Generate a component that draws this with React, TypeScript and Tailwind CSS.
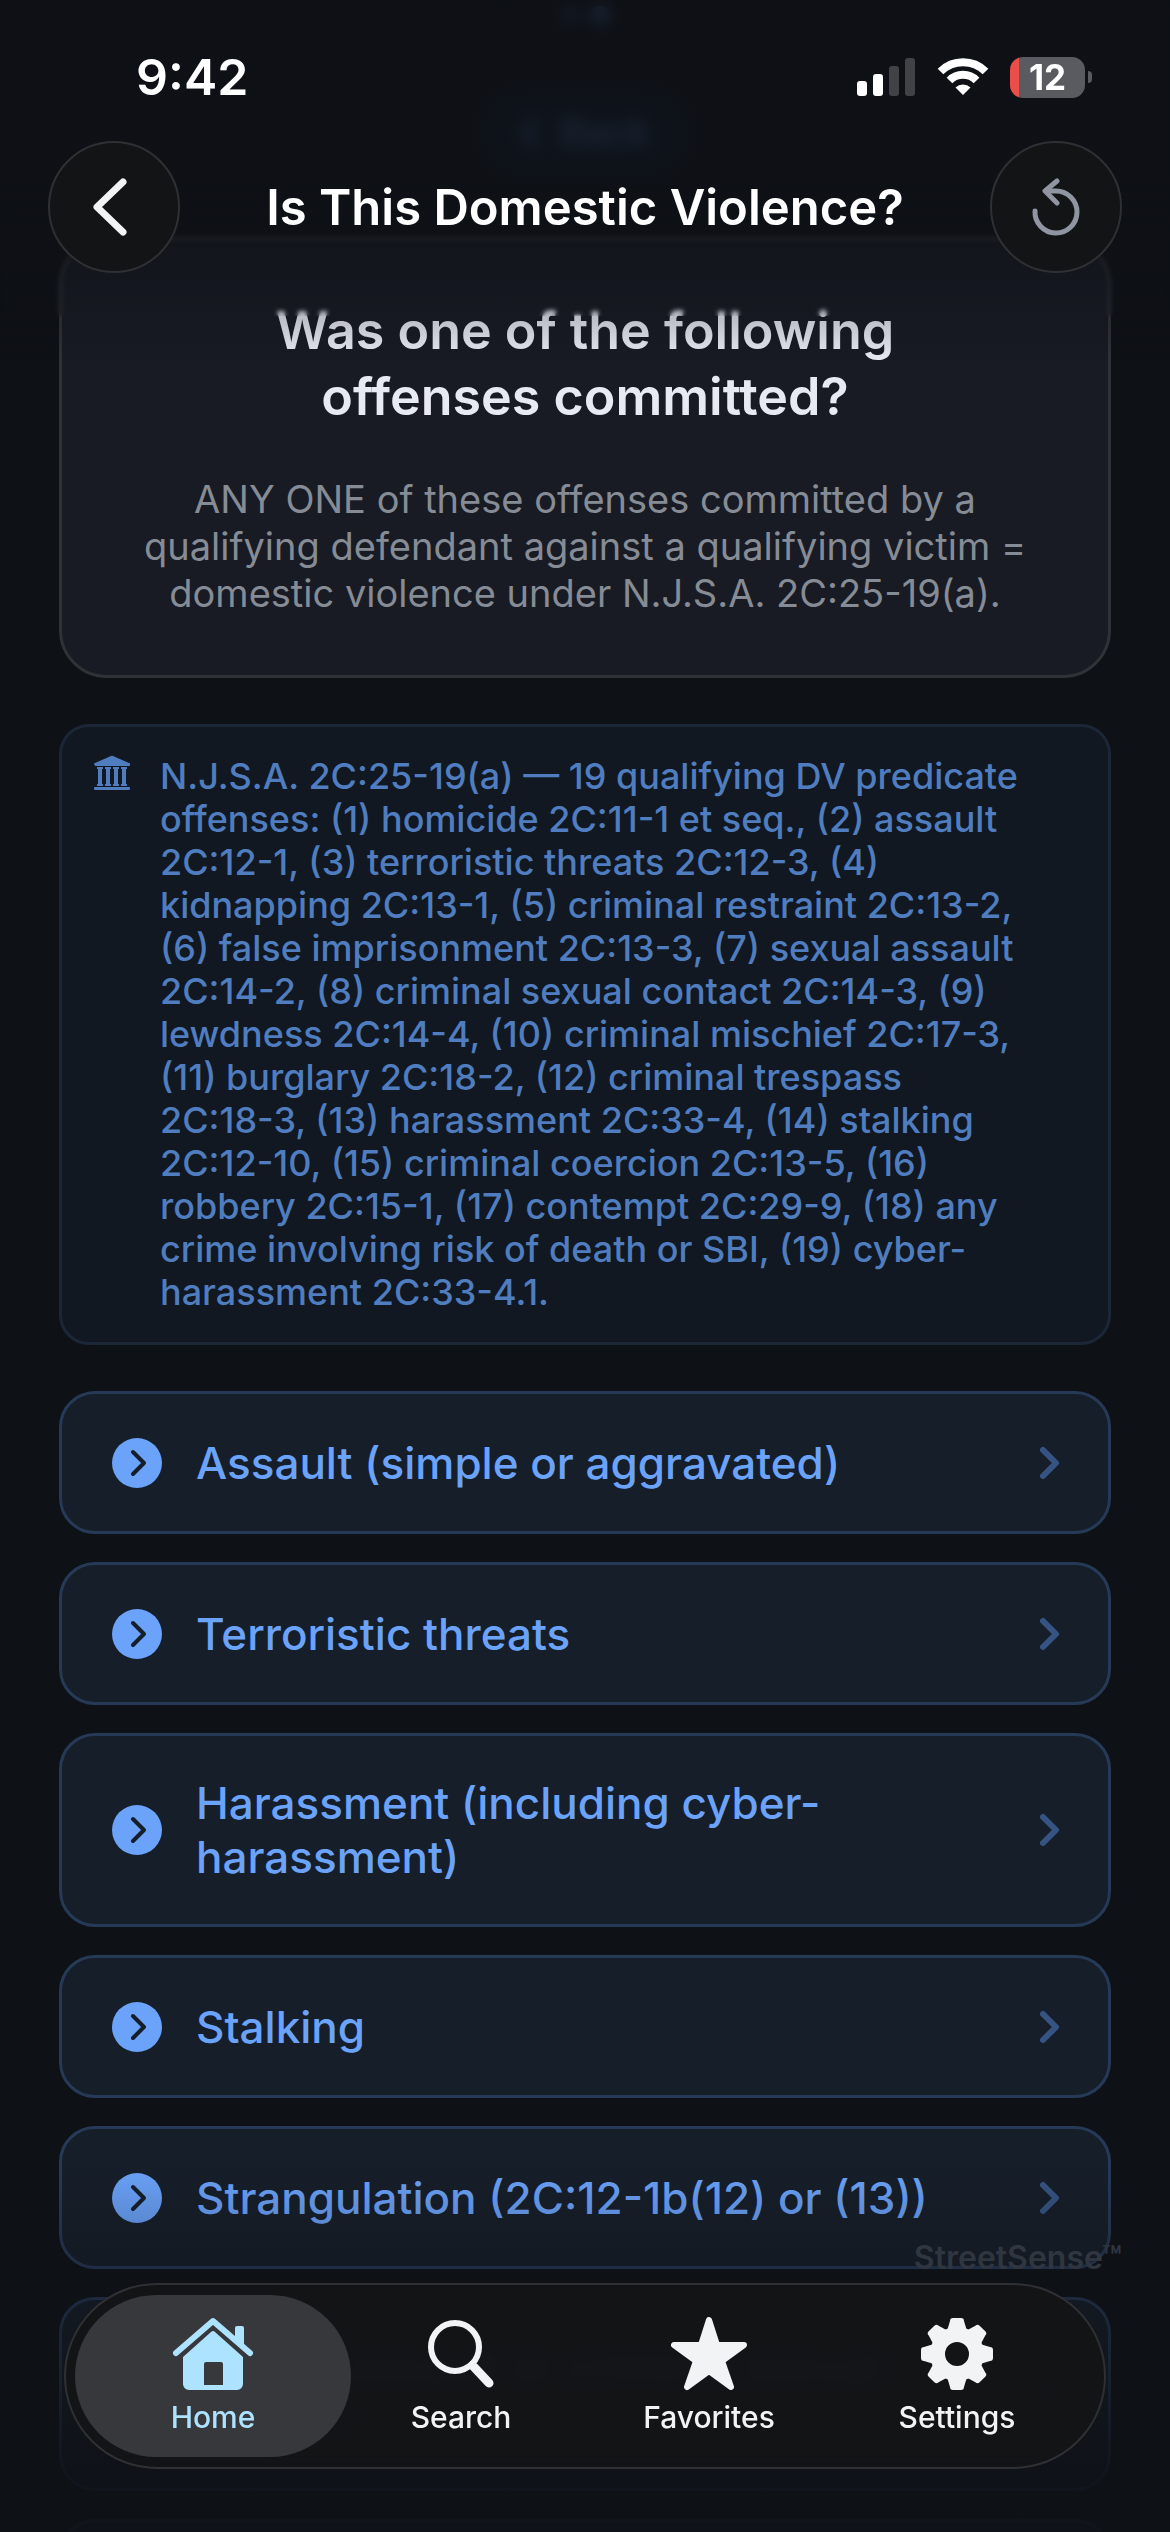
import { useState } from "react";
import type { ReactNode } from "react";

interface Tab {
  id: string;
  label: string;
  icon: ReactNode;
}

const offenses = [
  "Assault (simple or aggravated)",
  "Terroristic threats",
  "Harassment (including cyber-harassment)",
  "Stalking",
  "Strangulation (2C:12-1b(12) or (13))",
  "Sexual assault or criminal sexual contact",
  "Criminal mischief",
];

const tabs: Tab[] = [
  { id: "home", label: "Home", icon: <HomeIcon /> },
  { id: "search", label: "Search", icon: <SearchIcon /> },
  { id: "favorites", label: "Favorites", icon: <StarIcon /> },
  { id: "settings", label: "Settings", icon: <GearIcon /> },
];

function HomeIcon() {
  return (
    <svg viewBox="0 0 82 74" className="h-[74px] w-[82px]" fill="currentColor">
      <path
        d="M4 36 L41 4 L78 36"
        fill="none"
        stroke="currentColor"
        strokeWidth="6"
        strokeLinecap="round"
        strokeLinejoin="round"
      />
      <path d="M63 11a2 2 0 0 1 2-2h5a2 2 0 0 1 2 2v20l-9-8z" />
      <path
        fillRule="evenodd"
        d="M39 15a3 3 0 0 1 4 0 L71 40 V67a6 6 0 0 1-6 6H17a6 6 0 0 1-6-6V40z M34 45a2 2 0 0 0-2 2v21h19V47a2 2 0 0 0-2-2z"
      />
    </svg>
  );
}

function SearchIcon() {
  return (
    <svg viewBox="0 0 68 74" className="h-[74px] w-[68px]" fill="none" stroke="currentColor" strokeLinecap="round">
      <circle cx="28" cy="30" r="24" strokeWidth="6" />
      <path d="M45 47 L46 48" strokeWidth="6" />
      <path d="M47 50 L62 66" strokeWidth="9" />
    </svg>
  );
}

function StarIcon() {
  return (
    <svg viewBox="0 0 76 74" className="h-[74px] w-[76px]" fill="currentColor" stroke="currentColor" strokeWidth="6" strokeLinejoin="round">
      <path d="M38 3 L46 28 H73 L51 44 L60 70 L38 54 L16 70 L25 44 L3 28 H30z" />
    </svg>
  );
}

function GearIcon() {
  return (
    <svg viewBox="-36 -37 72 74" className="h-[74px] w-[72px]" fill="currentColor">
      <path
        fillRule="evenodd"
        d="M-27 0a27 27 0 1 1 54 0a27 27 0 1 1-54 0z M-12 0a12 12 0 1 0 24 0a12 12 0 1 0-24 0z"
      />
      {[0, 45, 90, 135, 180, 225, 270, 315].map((angle) => (
        <path key={angle} transform={`rotate(${angle})`} d="M-10-23 L-7-33a3 3 0 0 1 3-3h8a3 3 0 0 1 3 3L10-23z" />
      ))}
    </svg>
  );
}

function CourthouseIcon() {
  return (
    <svg viewBox="0 0 36 36" className="h-9 w-9 shrink-0" fill="currentColor">
      <path d="M1 10a1 1 0 0 1 0-2L17 1a2 2 0 0 1 2 0l16 7a1 1 0 0 1 0 3H1z" />
      <path d="M3 12h6v2H8v15h1v2H3v-2h1V14H3z M11 12h6v2h-1v15h1v2h-6v-2h1V14h-1z M19 12h6v2h-1v15h1v2h-6v-2h1V14h-1z M27 12h6v2h-1v15h1v2h-6v-2h1V14h-1z" />
      <rect x="0" y="32" width="36" height="3" rx="1" />
    </svg>
  );
}

function StatusBar() {
  return (
    <div className="flex h-[154px] items-center justify-between pr-[78px] pl-[136px]">
      <time className="text-[50px] leading-none font-semibold text-white">9:42</time>
      <div className="flex items-center gap-[21px]">
        <svg viewBox="0 0 59 38" className="h-[38px] w-[59px]">
          <rect x="0" y="23" width="10" height="15" rx="3" fill="#fff" />
          <rect x="16" y="16" width="10" height="22" rx="3" fill="#fff" />
          <rect x="32" y="8" width="10" height="30" rx="3" fill="#414246" />
          <rect x="48" y="0" width="10" height="38" rx="3" fill="#414246" />
        </svg>
        <svg viewBox="0 0 52 38" className="h-[38px] w-[52px]" fill="none" stroke="#fff">
          <path d="M3.500 13.500 A32 32 0 0 1 48.500 13.500" strokeWidth="8" />
          <path d="M12.500 22.500 A19 19 0 0 1 39.500 22.500" strokeWidth="8" />
          <path d="M26 37 L18.500 29.500 A11 11 0 0 1 33.500 29.500z" fill="#fff" stroke="none" />
        </svg>
        <div className="flex items-center gap-[3px]">
          <div className="flex h-[41px] w-[75px] items-center justify-center overflow-hidden rounded-[13px] bg-linear-to-r from-[#eb4d48] from-12% to-[#5a5b60] to-12%">
            <span className="text-[35px] leading-none font-bold text-white">12</span>
          </div>
          <div className="h-3 w-1 rounded-r-full bg-[#5a5b60]" />
        </div>
      </div>
    </div>
  );
}

function Header() {
  const roundButton =
    "flex size-[132px] shrink-0 items-center justify-center rounded-full border-2 border-[#2f3033] bg-[#131416]";

  return (
    <header className="absolute inset-x-0 top-0 z-10">
      <StatusBar />
      <div className="-mt-[13px] flex items-center justify-between px-12">
        <button type="button" aria-label="Back" className={roundButton}>
          <svg viewBox="0 0 34 58" className="mr-2 h-[58px] w-[34px]" fill="none" stroke="#f2f3f5" strokeWidth="7" strokeLinecap="round" strokeLinejoin="round">
            <path d="M30 4 L4 29 L30 54" />
          </svg>
        </button>
        <h1 className="text-[49px] leading-none font-semibold text-white">Is This Domestic Violence?</h1>
        <button type="button" aria-label="Start over" className={roundButton}>
          <svg viewBox="0 0 48 58" className="h-[58px] w-12" fill="none" stroke="#8f95a1" strokeWidth="5" strokeLinecap="round" strokeLinejoin="round">
            <path d="M3 33 A21 21 0 1 0 24 13 H14" />
            <path d="M25 3 L13 13 L25 25" />
          </svg>
        </button>
      </div>
    </header>
  );
}

function OffenseRow({ label }: { label: string }) {
  return (
    <li>
      <button
        type="button"
        className="flex min-h-[143px] w-full items-center gap-[34px] rounded-[36px] border-3 border-[#263a58] bg-[#161e29] py-10 pr-12 pl-[50px] text-left"
      >
        <svg viewBox="0 0 50 50" className="size-[50px] shrink-0">
          <circle cx="25" cy="25" r="25" fill="#6ba3fa" />
          <path d="M21 14 L32 25 L21 36" fill="none" stroke="#161e29" strokeWidth="4" strokeLinecap="round" strokeLinejoin="round" />
        </svg>
        <span className="flex-1 text-[44px] leading-[54px] font-medium text-[#6ba3fa]">{label}</span>
        <svg viewBox="0 0 20 34" className="h-[34px] w-5 shrink-0" fill="none" stroke="#365483" strokeWidth="6" strokeLinecap="round" strokeLinejoin="round">
          <path d="M3 4 L16 17 L3 30" />
        </svg>
      </button>
    </li>
  );
}

function TabBar() {
  const [active, setActive] = useState("home");

  return (
    <nav className="absolute inset-x-16 bottom-[63px] z-10 flex rounded-full border-2 border-[#2f3033] bg-[#131416]/95 px-[9px] py-[10px] backdrop-blur-sm">
      {tabs.map((tab) => (
        <button
          key={tab.id}
          type="button"
          onClick={() => setActive(tab.id)}
          className={`-ml-7 flex h-[162px] flex-1 flex-col items-center justify-center gap-2 rounded-full first:ml-0 ${
            active === tab.id ? "bg-[#37383b] text-[#aee3ff]" : "text-[#f2f3f5]"
          }`}
        >
          {tab.icon}
          <span className="text-[30px] leading-9 font-medium">{tab.label}</span>
        </button>
      ))}
    </nav>
  );
}

function App() {
  return (
    <div className="relative h-screen overflow-hidden bg-[#0e1116] font-['Inter',sans-serif]">
      <main className="flex flex-col px-[59px]">
        <div className="flex h-[30px] items-center justify-center gap-3">
          <span className="size-[18px] rounded-full bg-[#365483]" />
          <span className="size-[18px] rounded-full bg-[#6ba3fa]" />
        </div>
        <div className="mt-[55px] flex h-[95px] items-center justify-center gap-5 self-center rounded-full bg-[#121c30] px-11 text-[38px] font-semibold text-[#6ba3fa]">
          <svg viewBox="0 0 20 34" className="h-[34px] w-5" fill="none" stroke="currentColor" strokeWidth="6">
            <path d="M17 3 L4 17 L17 31" />
          </svg>
          Back
        </div>

        <section className="mt-[57px] rounded-[48px] border-3 border-[#2f3237] bg-[#181b23] px-[60px] py-[58px] text-center">
          <h2 className="mx-auto max-w-[700px] text-[52px] leading-[66px] font-semibold text-[#e8eaf3]">
            Was one of the following offenses committed?
          </h2>
          <p className="mt-[46px] text-[38px] leading-[47px] text-[#868c96]">
            ANY ONE of these offenses committed by a qualifying defendant against a qualifying victim =
            domestic violence under N.J.S.A. 2C:25-19(a).
          </p>
        </section>

        <section className="mt-[46px] flex gap-[30px] rounded-[30px] border-3 border-[#1b2637] bg-[#111821] py-7 pr-[88px] pl-8 text-[#4f7dbf]">
          <CourthouseIcon />
          <p className="text-[36px] leading-[43px] font-medium">
            N.J.S.A. 2C:25-19(a) — 19 qualifying DV predicate offenses: (1) homicide 2C:11-1 et seq., (2) assault
            2C:12-1, (3) terroristic threats 2C:12-3, (4) kidnapping 2C:13-1, (5) criminal restraint 2C:13-2, (6)
            false imprisonment 2C:13-3, (7) sexual assault 2C:14-2, (8) criminal sexual contact 2C:14-3, (9)
            lewdness 2C:14-4, (10) criminal mischief 2C:17-3, (11) burglary 2C:18-2, (12) criminal trespass
            2C:18-3, (13) harassment 2C:33-4, (14) stalking 2C:12-10, (15) criminal coercion 2C:13-5, (16) robbery
            2C:15-1, (17) contempt 2C:29-9, (18) any crime involving risk of death or SBI, (19) cyber-harassment
            2C:33-4.1.
          </p>
        </section>

        <ul className="mt-[46px] flex flex-col gap-7">
          {offenses.map((offense) => (
            <OffenseRow key={offense} label={offense} />
          ))}
        </ul>
      </main>

      {/* Edge fades behind the floating bars */}
      <div className="absolute inset-x-0 top-0 h-[230px] backdrop-blur-sm" />
      <div className="absolute inset-x-0 top-[230px] h-[86px] backdrop-blur-[2px]" />
      <div className="absolute inset-x-0 top-0 h-[360px] bg-linear-to-b from-[#0e1116]/85 from-50% to-transparent" />
      <div className="absolute inset-x-0 bottom-0 h-[370px] bg-linear-to-t from-[#0e1116]/90 from-15% to-transparent" />

      <Header />
      <p className="absolute right-12 bottom-[256px] text-[32px] leading-9 font-semibold text-[#2f3640]">StreetSense™</p>
      <TabBar />
    </div>
  );
}

export default App;
